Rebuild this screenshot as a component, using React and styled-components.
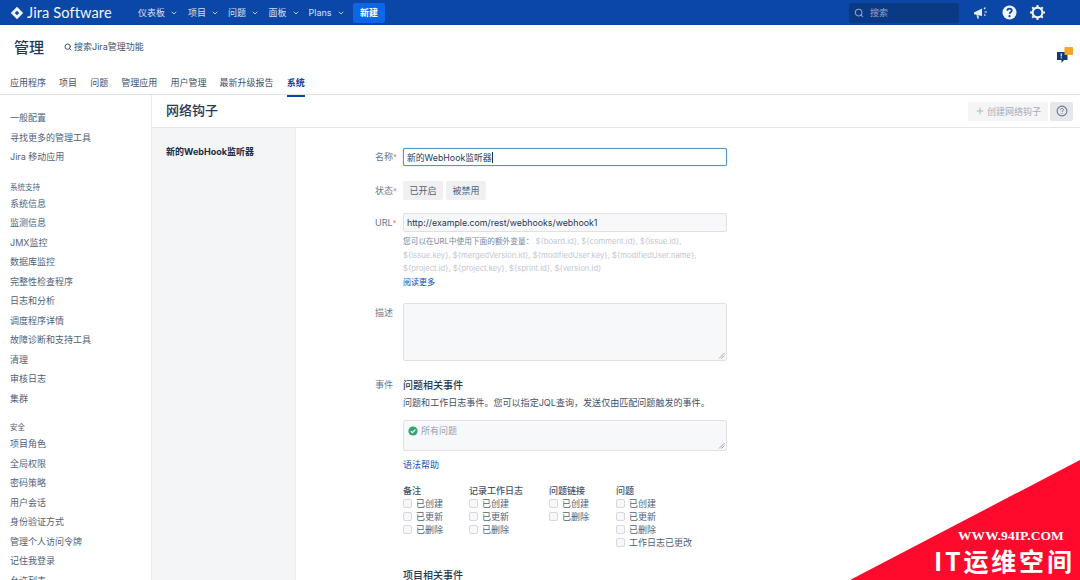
import React from "react";
import styled, { createGlobalStyle } from "styled-components";
import { ChevronDown, Search, Plus } from "lucide-react";

const Global = createGlobalStyle`
  html, body { margin: 0; padding: 0; background: #fff; }
  body { width: 1080px; height: 580px; overflow: hidden; font-family: "Inter", "Noto Sans CJK SC", sans-serif; color: #172b4d; }
  * { box-sizing: border-box; }
`;

const Page = styled.div`position: relative; width: 1080px; height: 580px; overflow: hidden; display: flex; flex-direction: column;`;

const TopBar = styled.header`
  height: 25px; flex: none; background: #0a47a6; color: #dbe6f6; display: flex; align-items: center; padding: 0 0 0 10px;
`;
const Logo = styled.div`display: flex; align-items: center; gap: 3px; color: #f2f6fc; width: 128px; font: 400 14.6px "Lato", "Noto Sans", sans-serif; letter-spacing: .1px;`;
const NavItem = styled.div`display: flex; align-items: center; font-size: 9px; width: ${p => p.$w}px; color: #d5e1f4; gap: 5px;`;
const CreateBtn = styled.div`width: 32px; height: 20px; background: #0c66e8; color: #fff; font-size: 9px; font-weight: 600; border-radius: 2px; display: flex; align-items: center; justify-content: center;`;
const TopRight = styled.div`margin-left: auto; display: flex; align-items: center;`;
const TopSearch = styled.div`width: 110px; height: 20px; background: #0b3a85; border-radius: 3px; display: flex; align-items: center; gap: 6px; padding-left: 5px; color: #8ea6cb; font-size: 9px; margin-right: 14px;`;
const TopIcon = styled.div`display: flex; width: 18px; margin-right: ${p => p.$mr}px;`;

const AdminHead = styled.div`height: 70px; flex: none; border-bottom: 1px solid #dfe1e6; position: relative; padding: 13px 0 0 10px; display: flex; flex-direction: column;`;
const TitleRow = styled.div`display: flex; align-items: center; height: 17px; padding-left: 4px;`;
const AdminTitle = styled.h1`margin: 0; font-size: 15px; font-weight: 500; color: #253858; width: 50px;`;
const AdminSearch = styled.div`display: flex; align-items: center; gap: 2px; font-size: 9px; color: #42526e;`;
const Tabs = styled.nav`display: flex; gap: 13.1px; margin-top: 19px; height: 23px;`;
const Tab = styled.div`
  font-size: 9px; line-height: 17px; height: 23px; color: ${p => p.$active ? "#0747a6" : "#42526e"};
  font-weight: ${p => p.$active ? 600 : 400}; border-bottom: 2px solid ${p => p.$active ? "#0747a6" : "transparent"};
`;
const Feedback = styled.div`position: absolute; right: 7px; top: 22px; display: flex;`;

const Body = styled.div`flex: 1; display: flex; min-height: 0;`;
const Sidebar = styled.aside`width: 152px; flex: none; border-right: 1px solid #e9ebef; padding: 13px 0 0 10px;`;
const SideItem = styled.div`font-size: 9px; height: 19.5px; line-height: 19.5px; color: #505f79; white-space: nowrap;`;
const SideHeading = styled.div`font-size: 7.5px; height: 12px; line-height: 12px; margin-top: ${p => p.$mt}px; color: #505f79;`;

const Main = styled.main`flex: 1; display: flex; flex-direction: column; min-width: 0;`;
const MainHead = styled.div`height: 33px; flex: none; display: flex; align-items: center; padding: 0 7px 0 14px; border-bottom: 1px solid #e4e6ea;`;
const MainTitle = styled.h2`margin: 0 0 3px; font-size: 13px; font-weight: 500; color: #253858; letter-spacing: 0;`;
const HeadBtns = styled.div`margin-left: auto; display: flex; gap: 2px;`;
const CreateHook = styled.div`width: 80px; height: 19px; background: #f4f5f7; color: #a5adba; font-size: 9px; display: flex; align-items: center; gap: 2px; padding-left: 7px; border-radius: 2px;`;
const HelpBtn = styled.div`width: 23px; height: 19px; background: #e6e7ea; border-radius: 2px; display: flex; align-items: center; justify-content: center;`;

const Columns = styled.div`flex: 1; display: flex; min-height: 0;`;
const LeftPanel = styled.div`width: 144px; flex: none; background: #f4f5f7; border-right: 1px solid #ebecf0; padding: 17px 0 0 14px; font-size: 9px; font-weight: 700; color: #172b4d; line-height: 14px;`;
const Form = styled.div`flex: 1; padding: 20px 0 0 0;`;
const Row = styled.div`display: grid; grid-template-columns: 107px 324px; margin-bottom: ${p => p.$mb ?? 0}px;`;
const Label = styled.div`padding-left: 79px; font-size: 9px; color: #6b778c; line-height: ${p => p.$lh ?? 18}px; white-space: nowrap;`;
const Req = styled.span`color: #e8806a; font-size: 8px;`;
const Input = styled.div`
  height: ${p => p.$h}px; border-radius: 2px; font-size: ${p => p.$fs ?? 9}px; display: flex; align-items: center; padding-left: 3px;
  background: ${p => p.$focus ? "#fff" : "#f7f8f9"}; color: #253858;
  border: ${p => p.$focus ? "1.5px solid #4c9ac9" : "1px solid #dfe1e6"};
  ${p => p.$focus ? "box-shadow: 0 0 1px #4c9ac9;" : ""}
`;
const Caret = styled.span`display: inline-block; width: 1px; height: 11px; background: #172b4d;`;
const Toggles = styled.div`display: flex; gap: 3px;`;
const Toggle = styled.div`width: 40px; height: 19px; background: #eff0f2; color: #505f79; font-size: 9px; display: flex; align-items: center; justify-content: center; border-radius: 2px;`;
const Help = styled.div`font-size: 7.7px; line-height: 13.7px; color: #c1c7d0; margin-top: 3px; white-space: nowrap;`;
const HelpLead = styled.span`color: #7a869a;`;
const LinkText = styled.div`color: #0b50b4; font-size: ${p => p.$s ?? 8}px; line-height: ${p => p.$lh ?? 13.7}px; margin-top: ${p => p.$mt ?? 0}px;`;
const TextArea = styled.div`
  position: relative; height: ${p => p.$h}px; margin-top: ${p => p.$mt ?? 0}px; background: #f7f8f9; border: 1px solid #dfe1e6; border-radius: 2px;
  display: flex; align-items: flex-start; gap: 3px; padding: 4px 0 0 4px; font-size: 9px; color: #97a0af; line-height: 12px;
`;
const Grip = styled.svg`position: absolute; right: 1px; bottom: 1px;`;
const Heading = styled.div`font-size: 10px; font-weight: 500; color: #253858; line-height: 14px; margin-top: ${p => p.$mt ?? 0}px;`;
const Desc = styled.div`font-size: 9.05px; color: #42526e; line-height: 14px; margin-top: 4px; white-space: nowrap;`;
const EventCols = styled.div`display: flex; margin-top: 12px;`;
const EventCol = styled.div`width: ${p => p.$w}px; flex: none;`;
const ColTitle = styled.div`font-size: 9px; color: #42526e; font-weight: 500; line-height: 13px;`;
const Check = styled.div`display: flex; align-items: center; gap: 4px; font-size: 9px; color: #505f79; height: 13px; white-space: nowrap;`;
const Box = styled.span`width: 9px; height: 9px; border: 1px solid #d5d8de; background: #f7f8f9; border-radius: 2px; flex: none;`;

const Watermark = styled.div`
  position: absolute; right: 0; bottom: 0; width: 230px; height: 120px; background: #ff0a2c;
  clip-path: polygon(100% 0, 100% 100%, 0 100%);
`;
const WmUrl = styled.div`position: absolute; left: 108px; top: 68px; font: 700 13.5px "Liberation Serif", serif; color: #fff; white-space: nowrap; letter-spacing: .1px;`;
const WmName = styled.div`position: absolute; left: 84px; top: 85px; font: 700 25px "Noto Sans CJK SC", sans-serif; line-height: 30px; color: #fff; white-space: nowrap; letter-spacing: 2.8px;`;

const navs = [["仪表板", 50], ["项目", 40], ["问题", 40.5], ["面板", 40], ["Plans", 44.5]];
const tabs = ["应用程序", "项目", "问题", "管理应用", "用户管理", "最新升级报告", "系统"];
const side1 = ["一般配置", "寻找更多的管理工具", "Jira 移动应用"];
const side2 = ["系统信息", "监测信息", "JMX监控", "数据库监控", "完整性检查程序", "日志和分析", "调度程序详情", "故障诊断和支持工具", "清理", "审核日志", "集群"];
const side3 = ["项目角色", "全局权限", "密码策略", "用户会话", "身份验证方式", "管理个人访问令牌", "记住我登录", "允许列表"];
const events = [
  ["备注", 66, ["已创建", "已更新", "已删除"]],
  ["记录工作日志", 80, ["已创建", "已更新", "已删除"]],
  ["问题链接", 67, ["已创建", "已删除"]],
  ["问题", 90, ["已创建", "已更新", "已删除", "工作日志已更改"]],
];

const Diamond = () => (
  <svg width="14" height="14" viewBox="0 0 14 14"><path d="M7 .8 13.2 7 7 13.2.8 7Z" fill="#f2f6fc" /><path d="M7 4.8 9.2 7 7 9.2 4.8 7Z" fill="#0a47a6" /></svg>
);
const Megaphone = () => (
  <svg width="16" height="16" viewBox="0 0 16 16"><path d="M1 7.5 9 3.5v7.5L1 9.3Z" fill="#e8eef8" /><path d="M3.5 10l2 .6.3 3.2h-1.3Z" fill="#e8eef8" /><path d="M11 4l1.5-1.5M11.5 7H14M11 9.5l1.5 1" stroke="#e8eef8" strokeWidth="1.1" fill="none" /></svg>
);
const HelpDot = () => (
  <svg width="15" height="15" viewBox="0 0 15 15"><circle cx="7.5" cy="7.5" r="7" fill="#f2f5fb" /><path d="M5.3 5.7c0-1.3 1-2.1 2.2-2.1s2.3.8 2.3 2c0 1.7-2.2 1.6-2.2 3.2" stroke="#0a47a6" strokeWidth="1.7" fill="none" /><circle cx="7.5" cy="11.2" r="1.1" fill="#0a47a6" /></svg>
);
const Gear = () => (
  <svg width="15" height="15" viewBox="0 0 15 15"><circle cx="7.5" cy="7.5" r="4.9" stroke="#eef3fa" strokeWidth="2.1" fill="none" /><g stroke="#eef3fa" strokeWidth="2"><path d="M7.5 0v2.4M7.5 12.6V15M0 7.5h2.4M12.6 7.5H15M2.2 2.2l1.7 1.7M11.1 11.1l1.7 1.7M12.8 2.2l-1.7 1.7M3.9 11.1l-1.7 1.7" /></g></svg>
);
const Chat = () => (
  <svg width="16" height="16" viewBox="0 0 16 16"><path d="M0 5h10.5v8H7l-2.5 3v-3H0Z" fill="#0d3a7c" /><rect x="7.5" y="0" width="8.5" height="8" rx=".8" fill="#f5a623" /><rect x="3.6" y="6.5" width="1.4" height="3" fill="#cfd8e6" /><rect x="3.6" y="10.3" width="1.4" height="1.2" fill="#cfd8e6" /></svg>
);
const Check2 = () => (
  <svg width="10" height="10" viewBox="0 0 10 10" style={{ flex: "none", marginTop: 1 }}><circle cx="5" cy="5" r="4.6" fill="#36a56f" /><path d="M2.8 5.1 4.4 6.6 7.3 3.6" stroke="#fff" strokeWidth="1.2" fill="none" /></svg>
);
const GripIcon = () => (
  <Grip width="7" height="7" viewBox="0 0 7 7"><path d="M1 6.5 6.5 1M3.5 6.5l3-3" stroke="#7a869a" strokeWidth=".7" /></Grip>
);
const QCircle = () => (
  <svg width="12" height="12" viewBox="0 0 12 12"><circle cx="6" cy="6" r="4.9" stroke="#6b778c" strokeWidth="1.1" fill="none" /><path d="M4.5 4.8c0-.9.7-1.4 1.5-1.4s1.5.5 1.5 1.3c0 1.1-1.5 1.1-1.5 2.2" stroke="#6b778c" strokeWidth="1" fill="none" /><circle cx="6" cy="8.5" r=".6" fill="#6b778c" /></svg>
);

export default function App() {
  return (
    <Page>
      <Global />
      <TopBar>
        <Logo><Diamond />Jira Software</Logo>
        {navs.map(([n, w]) => (
          <NavItem key={n} $w={w}>{n}<ChevronDown size={8} strokeWidth={2.5} /></NavItem>
        ))}
        <CreateBtn>新建</CreateBtn>
        <TopRight>
          <TopSearch><Search size={10} strokeWidth={2.5} />搜索</TopSearch>
          <TopIcon $mr={11}><Megaphone /></TopIcon>
          <TopIcon $mr={10}><HelpDot /></TopIcon>
          <TopIcon $mr={32}><Gear /></TopIcon>
        </TopRight>
      </TopBar>
      <AdminHead>
        <TitleRow>
          <AdminTitle>管理</AdminTitle>
          <AdminSearch><Search size={8} strokeWidth={3} />搜索Jira管理功能</AdminSearch>
        </TitleRow>
        <Tabs>
          {tabs.map(t => <Tab key={t} $active={t === "系统"}>{t}</Tab>)}
        </Tabs>
        <Feedback><Chat /></Feedback>
      </AdminHead>
      <Body>
        <Sidebar>
          {side1.map(s => <SideItem key={s}>{s}</SideItem>)}
          <SideHeading $mt={15}>系统支持</SideHeading>
          {side2.map(s => <SideItem key={s}>{s}</SideItem>)}
          <SideHeading $mt={14}>安全</SideHeading>
          {side3.map(s => <SideItem key={s}>{s}</SideItem>)}
        </Sidebar>
        <Main>
          <MainHead>
            <MainTitle>网络钩子</MainTitle>
            <HeadBtns>
              <CreateHook><Plus size={10} strokeWidth={2} />创建网络钩子</CreateHook>
              <HelpBtn><QCircle /></HelpBtn>
            </HeadBtns>
          </MainHead>
          <Columns>
            <LeftPanel>新的WebHook监听器</LeftPanel>
            <Form>
              <Row $mb={15}>
                <Label>名称<Req>*</Req></Label>
                <Input $h={18} $fs={8.8} $focus>新的WebHook监听器<Caret /></Input>
              </Row>
              <Row $mb={12}>
                <Label $lh={19}>状态<Req>*</Req></Label>
                <Toggles><Toggle>已开启</Toggle><Toggle>被禁用</Toggle></Toggles>
              </Row>
              <Row $mb={13}>
                <Label $lh={19}>URL<Req>*</Req></Label>
                <div>
                  <Input $h={19} $fs={8.8}>http://example.com/rest/webhooks/webhook1</Input>
                  <Help>
                    <HelpLead>您可以在URL中使用下面的额外变量：</HelpLead> ${"{board.id}"}, ${"{comment.id}"}, ${"{issue.id}"},<br />
                    ${"{issue.key}"}, ${"{mergedVersion.id}"}, ${"{modifiedUser.key}"}, ${"{modifiedUser.name}"},<br />
                    ${"{project.id}"}, ${"{project.key}"}, ${"{sprint.id}"}, ${"{version.id}"}
                  </Help>
                  <LinkText>阅读更多</LinkText>
                </div>
              </Row>
              <Row $mb={17}>
                <Label $lh={20}>描述</Label>
                <TextArea $h={58}><GripIcon /></TextArea>
              </Row>
              <Row>
                <Label $lh={14}>事件</Label>
                <div>
                  <Heading>问题相关事件</Heading>
                  <Desc>问题和工作日志事件。您可以指定JQL查询，发送仅由匹配问题触发的事件。</Desc>
                  <TextArea $h={31} $mt={10}><Check2 />所有问题<GripIcon /></TextArea>
                  <LinkText $s={9} $lh={14} $mt={7}>语法帮助</LinkText>
                  <EventCols>
                    {events.map(([t, w, items]) => (
                      <EventCol key={t} $w={w}>
                        <ColTitle>{t}</ColTitle>
                        {items.map(i => <Check key={i}><Box />{i}</Check>)}
                      </EventCol>
                    ))}
                  </EventCols>
                  <Heading $mt={19}>项目相关事件</Heading>
                </div>
              </Row>
            </Form>
          </Columns>
        </Main>
      </Body>
      <Watermark>
        <WmUrl>WWW.94IP.COM</WmUrl>
        <WmName>IT运维空间</WmName>
      </Watermark>
    </Page>
  );
}
